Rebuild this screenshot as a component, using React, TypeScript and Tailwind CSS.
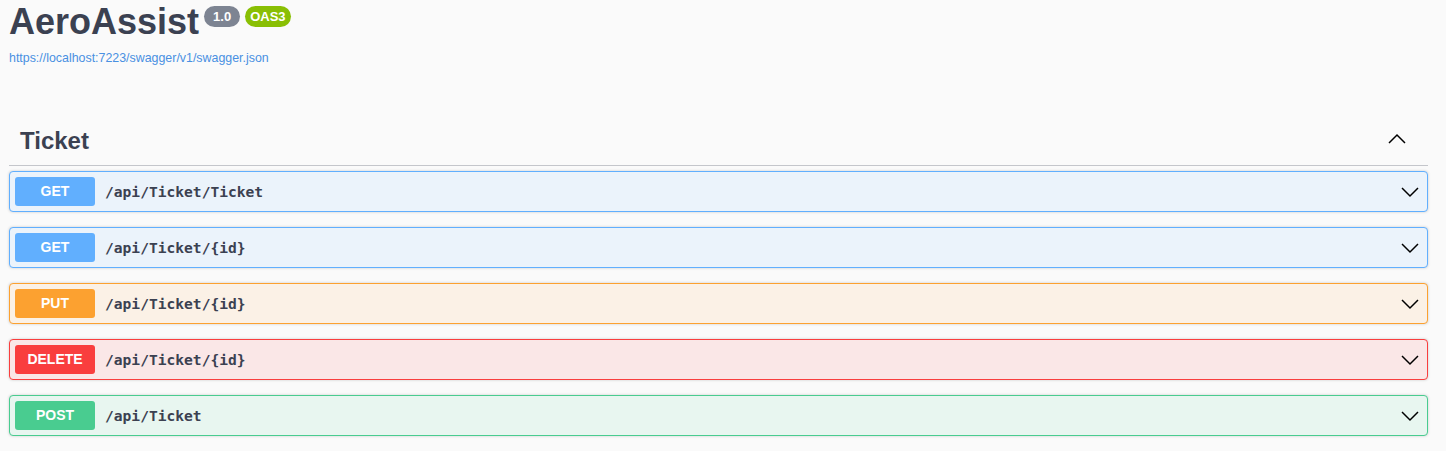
import React from "react";

type Op = { method: string; path: string; badge: string; bg: string; border: string };

const ops: Op[] = [
  { method: "GET", path: "/api/Ticket/Ticket", badge: "bg-[#61affe]", bg: "bg-[#ebf3fb]", border: "border-[#61affe]" },
  { method: "GET", path: "/api/Ticket/{id}", badge: "bg-[#61affe]", bg: "bg-[#ebf3fb]", border: "border-[#61affe]" },
  { method: "PUT", path: "/api/Ticket/{id}", badge: "bg-[#fca130]", bg: "bg-[#fbf1e6]", border: "border-[#fca130]" },
  { method: "DELETE", path: "/api/Ticket/{id}", badge: "bg-[#f93e3e]", bg: "bg-[#fae7e7]", border: "border-[#f93e3e]" },
  { method: "POST", path: "/api/Ticket", badge: "bg-[#49cc90]", bg: "bg-[#e8f6f0]", border: "border-[#49cc90]" },
];

function Chevron({ up }: { up?: boolean }) {
  return (
    <svg width="20" height="20" viewBox="0 0 20 20" className="shrink-0">
      <polyline
        points={up ? "2,14 10,6 18,14" : "2,6 10,14 18,6"}
        fill="none"
        stroke="#000"
        strokeWidth="1.5"
      />
    </svg>
  );
}

export default function App() {
  return (
    <div className="min-h-[451px] bg-[#fafafa] text-[#3b4151] font-['Liberation_Sans',Arial,sans-serif]">
      <div className="pl-[9px] pt-[1px]">
        <div className="flex items-start">
          <h1 className="text-[36px] leading-[36px] font-bold pt-[3px]">AeroAssist</h1>
          <span className="ml-[5px] mt-[5px] h-[21px] px-[9px] rounded-full bg-[#7d8492] text-white text-[13px] font-bold leading-[21px]">
            1.0
          </span>
          <span className="ml-[5px] mt-[5px] h-[21px] px-[5px] rounded-full bg-[#89bf04] text-white text-[13px] font-bold leading-[21px]">
            OAS3
          </span>
        </div>
        <a className="block mt-[11px] text-[12.4px] leading-[14px] text-[#4990e2]">
          https://localhost:7223/swagger/v1/swagger.json
        </a>
      </div>

      <div className="ml-[9px] w-[1419px] mt-[55px]">
        <div className="flex items-center justify-between h-[46px] pl-[11px] pr-[21px] pb-[4px] border-b border-[#c4c6cb]">
          <h3 className="text-[24px] font-bold leading-[28px]">Ticket</h3>
          <span className="mb-[4px]">
            <Chevron up />
          </span>
        </div>
        <div className="mt-[5px] flex flex-col gap-[15px]">
          {ops.map((op, i) => (
            <div
              key={i}
              className={`flex items-center h-[41px] px-[5px] border rounded-[4px] shadow-[0_0_3px_rgba(0,0,0,0.19)] ${op.bg} ${op.border}`}
            >
              <span
                className={`w-[80px] h-[29px] leading-[29px] rounded-[3px] text-center text-white text-[14px] font-bold ${op.badge}`}
              >
                {op.method}
              </span>
              <span className="ml-[10px] flex-1 font-['DejaVu_Sans_Mono',monospace] font-bold text-[14.6px] text-[#3b4151]">
                {op.path}
              </span>
              <span className="mr-[2px]">
                <Chevron />
              </span>
            </div>
          ))}
        </div>
      </div>
    </div>
  );
}
